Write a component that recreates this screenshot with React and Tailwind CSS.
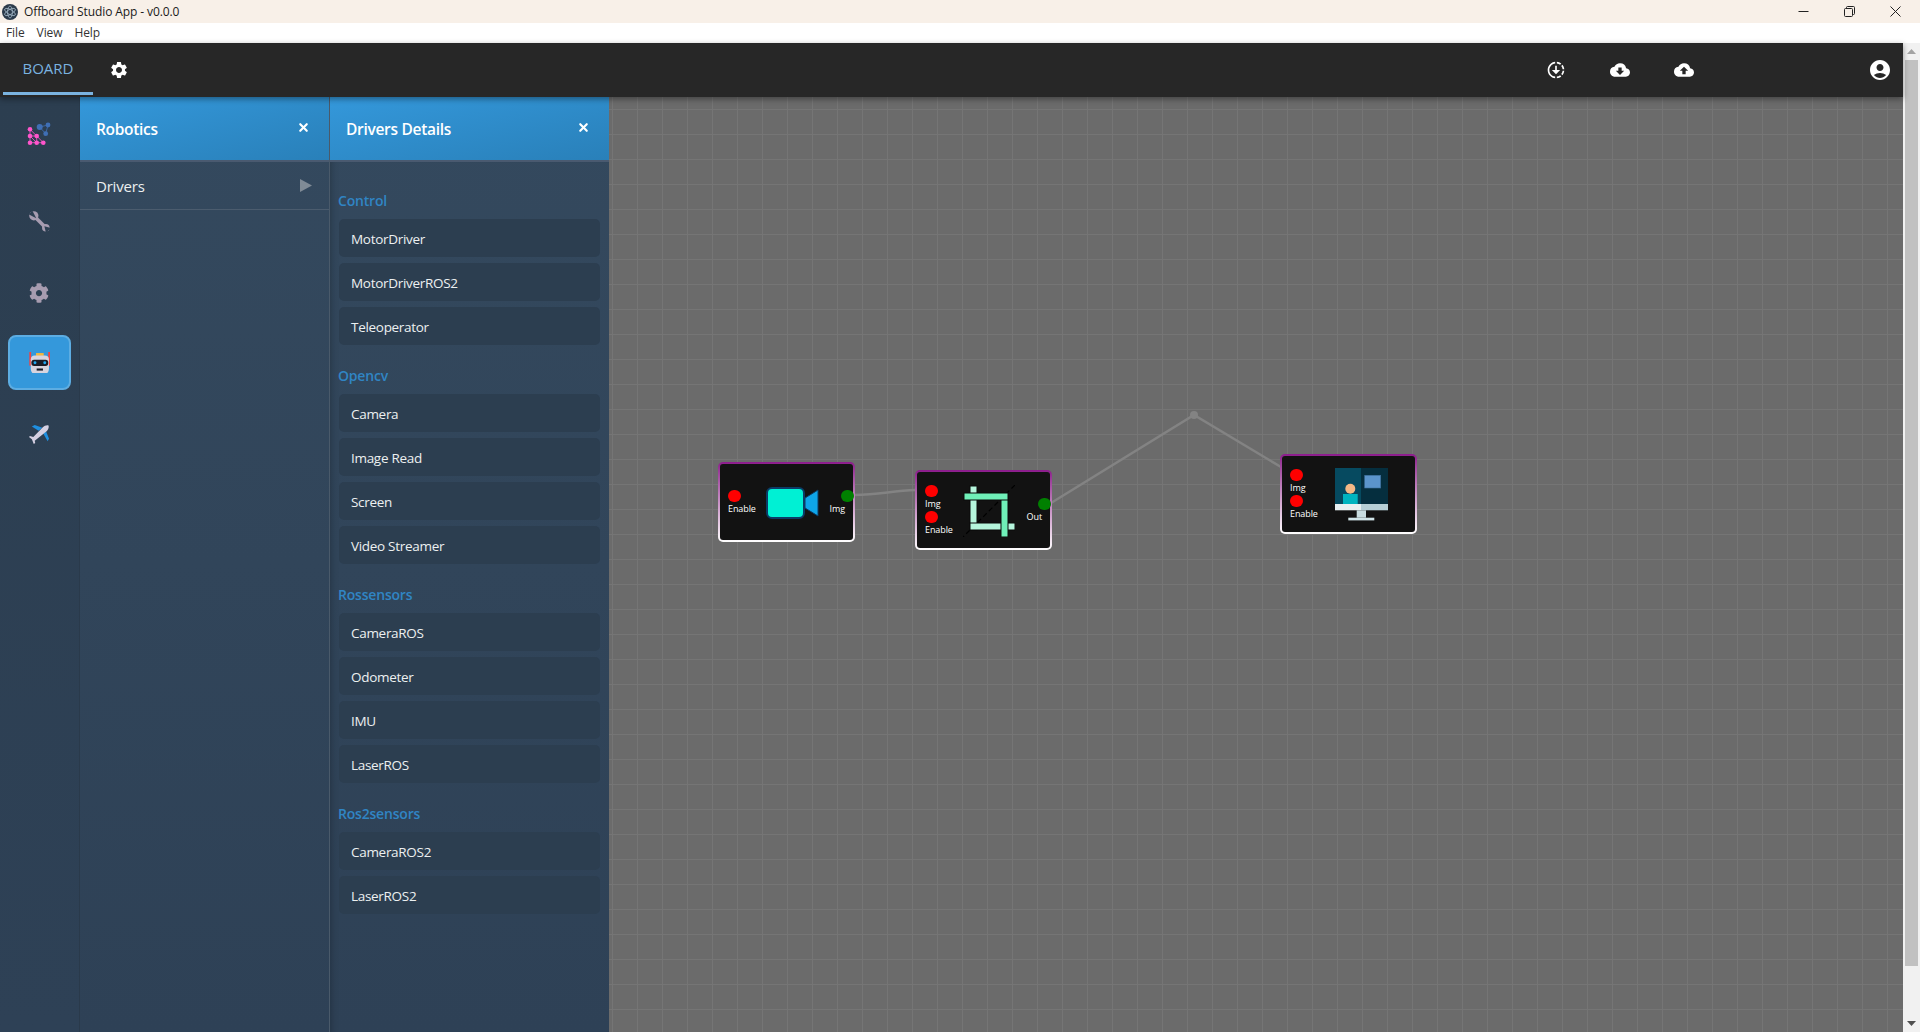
import { X } from 'lucide-react'
import { FaCog } from 'react-icons/fa'
import { MdSettings, MdDownloading, MdCloudDownload, MdCloudUpload, MdAccountCircle } from 'react-icons/md'

const GROUPS = [
  { title: 'Control', items: ['MotorDriver', 'MotorDriverROS2', 'Teleoperator'] },
  { title: 'Opencv', items: ['Camera', 'Image Read', 'Screen', 'Video Streamer'] },
  { title: 'Rossensors', items: ['CameraROS', 'Odometer', 'IMU', 'LaserROS'] },
  { title: 'Ros2sensors', items: ['CameraROS2', 'LaserROS2'] },
]

function AppLogo() {
  return (
    <svg width="18" height="18" viewBox="0 0 18 18" fill="none">
      <circle cx="9" cy="9" r="8" fill="#2b3a4a" />
      <g stroke="#9fb4c4" strokeWidth="0.8">
        <ellipse cx="9" cy="9" rx="6" ry="2.4" transform="rotate(30 9 9)" />
        <ellipse cx="9" cy="9" rx="6" ry="2.4" transform="rotate(90 9 9)" />
        <ellipse cx="9" cy="9" rx="6" ry="2.4" transform="rotate(150 9 9)" />
      </g>
    </svg>
  )
}

function GraphIcon() {
  const pink = [[3, 8.3], [3, 15], [9.7, 15], [3, 21.7], [9.7, 21.7], [16.3, 21.7]]
  const blue = [[12.7, 6], [21, 4], [18.7, 12.7]]
  return (
    <svg width="24" height="24" viewBox="0 0 24 24" fill="none">
      <path d="M3 8.3V21.7H16.3M3 15H9.7V21.7M3 8.3L9.7 15L16.3 21.7M3 15L9.7 21.7" stroke="#ff55cc" strokeWidth="0.8" />
      <path d="M12.7 6L21 4L18.7 12.7Z" stroke="#3f6fb5" strokeWidth="0.8" />
      {pink.map(([x, y]) => <circle key={`${x}-${y}`} cx={x} cy={y} r="2.3" fill="#ff55cc" />)}
      {blue.map(([x, y]) => <circle key={`${x}-${y}`} cx={x} cy={y} r={x === 12.7 ? 3 : 2.4} fill="#3f6fb5" />)}
    </svg>
  )
}

function WrenchIcon() {
  return (
    <svg width="21" height="21" viewBox="0 0 20 20" fill="none">
      <path d="M5 5L16 16" stroke="#a79cb0" strokeWidth="3.4" />
      <circle cx="4.6" cy="4.6" r="4.4" fill="#a79cb0" />
      <circle cx="16" cy="16" r="3.6" fill="#a79cb0" />
      <path d="M0.5 2.5L4.6 4.6L2.5 0.5" fill="#2d3f52" stroke="#2d3f52" strokeWidth="2" />
      <path d="M20 17L16 16L17 20" fill="#2d3f52" stroke="#2d3f52" strokeWidth="2" />
    </svg>
  )
}

function RobotIcon() {
  return (
    <svg width="21" height="21" viewBox="0 0 20 20">
      <rect x="0.3" y="0" width="1.7" height="13" fill="#ef4444" />
      <rect x="18.3" y="0" width="1.7" height="13" fill="#ef4444" />
      <rect x="6.7" y="1" width="7.3" height="2.7" fill="#f6b73c" />
      <path d="M1.7 7Q1.7 3.3 5.5 3.3H15Q19 3.3 19 7V16Q19 20.7 15 20.7H5.5Q1.7 20.7 1.7 16Z" fill="#d8d4de" />
      <rect x="2.3" y="7.3" width="16" height="6" rx="2.5" fill="#1a1c26" />
      <circle cx="5.7" cy="10.2" r="1.4" fill="#22a7f0" />
      <circle cx="15" cy="10.2" r="1.4" fill="#22a7f0" />
      <rect x="7.3" y="15.7" width="6" height="2" fill="#1a1c26" />
    </svg>
  )
}

function PlaneIcon() {
  return (
    <svg width="21" height="21" viewBox="0 0 22 22">
      <path d="M10 7L3 2.5L6 1L14 4Z" fill="#1f8fe0" />
      <path d="M15 10L19.5 18L21 15.5L18 8Z" fill="#1f8fe0" />
      <path d="M20.5 1.5C18.5 0.8 16 2 14.5 3.5L4.5 13.5L1 12.5L0 13.5L3 16L5 21L6.5 20L6 17.5L18.5 7.5C20 6 21.2 3.5 20.5 1.5Z" fill="#d5d0e2" />
    </svg>
  )
}

function CameraGlyph() {
  return (
    <svg width="53" height="32" viewBox="0 0 53 32">
      <rect x="1" y="1" width="37" height="30" rx="5" fill="#00f0d4" stroke="#0b3b66" strokeWidth="2" />
      <path d="M39 11L52 3V29L39 21Z" fill="#0ea5e9" stroke="#0b3b66" strokeWidth="1" />
    </svg>
  )
}

function CropGlyph() {
  return (
    <svg width="52" height="52" viewBox="0 0 52 52">
      <path d="M52 0L0 52" stroke="#000" strokeWidth="1.2" strokeDasharray="5 3" />
      <g stroke="#0a0a0a" strokeWidth="1">
        <rect x="7" y="1" width="7" height="44" fill="#b5f5dc" />
        <rect x="7" y="38" width="45" height="7" fill="#b5f5dc" />
        <rect x="38" y="8" width="7" height="44" fill="#6ff0b8" />
        <rect x="1" y="8" width="44" height="7" fill="#6ff0b8" />
      </g>
    </svg>
  )
}

function ScreenGlyph() {
  return (
    <svg width="53" height="53" viewBox="0 0 53 53">
      <rect x="0" y="0" width="26" height="36" fill="#064a60" />
      <rect x="26" y="0" width="27" height="36" fill="#052e3e" />
      <rect x="29.7" y="7.3" width="16" height="12.7" fill="#5b94cb" stroke="#3f6f9c" strokeWidth="0.6" />
      <rect x="8" y="26" width="14.7" height="10.3" fill="#00b4c0" />
      <circle cx="15.3" cy="20.7" r="5" fill="#f4b886" />
      <rect x="0" y="36" width="26" height="6.3" fill="#e8f0f2" />
      <rect x="26" y="36" width="27" height="6.3" fill="#b6cfd6" />
      <rect x="21.7" y="42.3" width="9.3" height="7.4" fill="#c8dce0" />
      <rect x="13.3" y="49.7" width="26" height="2.7" fill="#d0e4e8" />
    </svg>
  )
}

function Port({ label, color, right }) {
  return (
    <div className={`flex flex-col h-[26px] ${right ? 'items-end' : 'items-start'}`}>
      <div className={`w-[13px] h-[13px] rounded-full ${color}`} />
      <span className={`text-[9px] leading-[14px] tracking-[-0.1px] text-white ${right ? 'mr-[9px]' : ''}`}>{label}</span>
    </div>
  )
}

function FlowNode({ className, inputs, outputs, iconClass, children }) {
  return (
    <div className={`absolute w-[137px] h-[80px] rounded-[5px] p-[2px] bg-gradient-to-b from-[#8c1a8c] to-white ${className}`}>
      <div className="flex items-center h-full rounded-[3px] bg-[#121212] pl-[8px] pt-[1px]">
        <div className="flex flex-col">
          {inputs.map(p => <Port key={p} label={p} color="bg-[#ff0000]" />)}
        </div>
        <div className={iconClass}>{children}</div>
        <div className="flex flex-col ml-auto -mr-[1px]">
          {outputs.map(p => <Port key={p} label={p} color="bg-[#008000]" right />)}
        </div>
      </div>
    </div>
  )
}

function SideButton({ active, children }) {
  return (
    <div className={`flex items-center justify-center w-[63px] h-[55px] rounded-[8px] border-2 ${active ? 'bg-[#3498db] border-[#5dade2]' : 'border-transparent'}`}>
      {children}
    </div>
  )
}

function PanelHeader({ title }) {
  return (
    <div className="flex items-center justify-between h-[65px] shrink-0 pl-[16px] bg-gradient-to-br from-[#3498db] to-[#2980b9] border-b-2 border-[#4a5a70]">
      <span className="pt-[2px] text-[15.5px] tracking-[-0.3px] font-semibold text-white">{title}</span>
      <X size={13} strokeWidth={4} className="text-white mr-[19px] mb-[3px]" />
    </div>
  )
}

export default function App() {
  return (
    <div className="flex flex-col h-[1032px] overflow-hidden font-['Open_Sans',sans-serif] bg-white">
      <div className="flex items-center h-[23px] shrink-0 bg-[#f8f0e8] text-[12px] text-[#1a1a1a]">
        <div className="ml-[1px] mr-[5px]"><AppLogo /></div>
        <span className="tracking-[-0.1px]">Offboard Studio App - v0.0.0</span>
        <div className="flex items-center ml-auto mr-[2px]">
          <div className="flex justify-center w-[46px]">
            <svg width="11" height="11" viewBox="0 0 11 11"><path d="M0.5 5.5H10.5" stroke="#222" /></svg>
          </div>
          <div className="flex justify-center w-[46px]">
            <svg width="11" height="11" viewBox="0 0 11 11" fill="none" stroke="#222"><rect x="0.5" y="2.5" width="8" height="8" rx="1" /><path d="M2.5 2.5V1.5Q2.5 0.5 3.5 0.5H9.5Q10.5 0.5 10.5 1.5V7.5Q10.5 8.5 9.5 8.5H8.5" /></svg>
          </div>
          <div className="flex justify-center w-[46px]">
            <svg width="11" height="11" viewBox="0 0 11 11"><path d="M0.5 0.5L10.5 10.5M10.5 0.5L0.5 10.5" stroke="#222" /></svg>
          </div>
        </div>
      </div>

      <div className="flex items-center gap-[12px] h-[20px] shrink-0 pl-[6px] text-[12px] tracking-[-0.1px] text-[#333]">
        <span>File</span>
        <span>View</span>
        <span>Help</span>
      </div>

      <div className="flex flex-1 min-h-0">
        <div className="flex flex-col flex-1 min-w-0">
          <div className="relative z-10 flex items-stretch h-[54px] shrink-0 bg-[#272727] shadow-[0_2px_6px_rgba(0,0,0,0.4)]">
            <div className="flex items-center justify-center w-[90px] ml-[3px] pt-[2px] text-[15px] text-[#7ab3e0] border-b-[3px] border-[#7ab3e0] mb-[2px]">BOARD</div>
            <div className="flex items-center ml-[16px]"><MdSettings size={20} className="text-white" /></div>
            <div className="flex items-center ml-auto text-white">
              <MdDownloading size={20} />
              <MdCloudDownload size={20} className="ml-[44px]" />
              <MdCloudUpload size={20} className="ml-[44px]" />
              <MdAccountCircle size={24} className="ml-[174px] mr-[11px]" />
            </div>
          </div>

          <div className="flex flex-1 min-h-0">
            <div className="flex flex-col items-center w-[80px] shrink-0 pt-[8px] pr-[1px] bg-gradient-to-b from-[#2c3e50] to-[#2e4156] border-r border-[#2a3a4b]">
              <SideButton><GraphIcon /></SideButton>
              <div className="mt-[34px]"><SideButton><WrenchIcon /></SideButton></div>
              <div className="mt-[16px]"><SideButton><FaCog size={20} className="text-[#a79cb0]" /></SideButton></div>
              <div className="mt-[15px]"><SideButton active><RobotIcon /></SideButton></div>
              <div className="mt-[17px]"><SideButton><PlaneIcon /></SideButton></div>
            </div>

            <div className="flex flex-col w-[250px] shrink-0 bg-gradient-to-b from-[#34495e] to-[#2e4156] border-r border-[#4a5a6a]">
              <PanelHeader title="Robotics" />
              <div className="flex items-center justify-between h-[48px] pl-[16px] pr-[17px] border-b border-[#4b5c6e]">
                <span className="pt-[1px] text-[15px] tracking-[-0.2px] text-[#ecf0f1]">Drivers</span>
                <svg width="12" height="13" viewBox="0 0 12 13"><path d="M0 0L12 6.5L0 13Z" fill="#808b96" /></svg>
              </div>
            </div>

            <div className="flex flex-col w-[279px] shrink-0 bg-gradient-to-b from-[#34495e] to-[#2e4156]">
              <PanelHeader title="Drivers Details" />
              <div className="flex-1 pt-[8px] px-[9px] shadow-[inset_8px_0_8px_-8px_rgba(0,0,0,0.3)]">
                {GROUPS.map(group => (
                  <div key={group.title} className="mt-[19px]">
                    <div className="h-[24px] mb-[6px] -ml-[1px] text-[14px] tracking-[-0.2px] leading-[24px] font-semibold text-[#3085c4]">{group.title}</div>
                    <div className="flex flex-col gap-[6px]">
                      {group.items.map(item => (
                        <div key={item} className="flex items-center h-[38px] pl-[12px] pt-[2px] rounded-[5px] bg-[#2c3e50] text-[13.5px] tracking-[-0.3px] text-[#ecf0f1]">{item}</div>
                      ))}
                    </div>
                  </div>
                ))}
              </div>
            </div>

            <div className="relative flex-1 min-w-0 bg-[#6b6b6b] bg-[linear-gradient(to_right,#757575_1px,transparent_1px),linear-gradient(to_bottom,#757575_1px,transparent_1px)] bg-[size:25px_25px] bg-[position:3px_12px]">
              <svg className="absolute left-0 top-0 w-full h-full" fill="none" stroke="#838383" strokeWidth="2.5">
                <path d="M245 398C271 398 281 394 307 393" />
                <path d="M442 406L585 318L672 370" />
                <circle cx="585" cy="318" r="4" fill="#838383" stroke="none" />
              </svg>
              <FlowNode className="left-[109px] top-[365px]" inputs={['Enable']} outputs={['Img']} iconClass="ml-[10px]">
                <CameraGlyph />
              </FlowNode>
              <FlowNode className="left-[306px] top-[373px]" inputs={['Img', 'Enable']} outputs={['Out']} iconClass="ml-[10px]">
                <CropGlyph />
              </FlowNode>
              <FlowNode className="left-[671px] top-[357px]" inputs={['Img', 'Enable']} outputs={[]} iconClass="ml-[17px]">
                <ScreenGlyph />
              </FlowNode>
            </div>
          </div>
        </div>

        <div className="flex flex-col items-center w-[17px] shrink-0 bg-[#f1f1f1]">
          <svg className="mt-[6px]" width="9" height="5" viewBox="0 0 9 5"><path d="M4.5 0L9 5H0Z" fill="#a3a3a3" /></svg>
          <div className="w-[13px] h-[906px] mt-[6px] bg-[#c1c1c1]" />
          <svg className="mt-auto mb-[6px]" width="9" height="5" viewBox="0 0 9 5"><path d="M4.5 5L0 0H9Z" fill="#505050" /></svg>
        </div>
      </div>
    </div>
  )
}
